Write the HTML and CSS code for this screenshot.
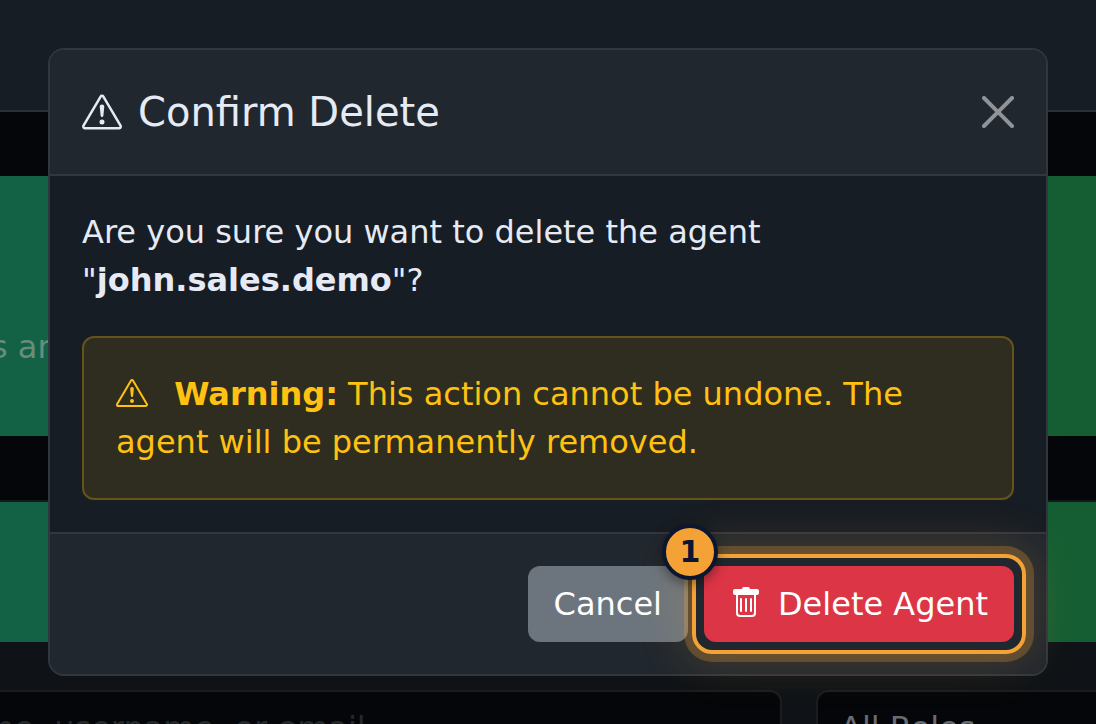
FILE: index.html
```html
<!DOCTYPE html>
<html lang="en">
<head>
<meta charset="utf-8">
<title>Confirm Delete</title>
<link rel="stylesheet" href="styles.css">
</head>
<body>
<div class="page">
  <header class="topbar"></header>
  <section class="hero"><p class="hero-text">s and</p></section>
  <section class="card">
    <div class="card-header"></div>
    <div class="filters">
      <input class="field search" type="text" placeholder="me, username, or email" aria-label="Search agents">
      <select class="field roles" aria-label="Role"><option>All Roles</option></select>
    </div>
  </section>
</div>

<div class="overlay">
  <div class="modal" role="dialog" aria-modal="true" aria-labelledby="modal-title">
    <div class="modal-header">
      <h1 class="modal-title" id="modal-title">
        <svg class="icon" viewBox="0 0 16 16" fill="currentColor" aria-hidden="true"><path d="M7.938 2.016A.13.13 0 0 1 8.002 2a.13.13 0 0 1 .063.016.15.15 0 0 1 .054.057l6.857 11.667c.036.06.035.124.002.183a.2.2 0 0 1-.054.06.1.1 0 0 1-.066.017H1.146a.1.1 0 0 1-.066-.017.2.2 0 0 1-.054-.06.18.18 0 0 1 .002-.183L7.884 2.073a.15.15 0 0 1 .054-.057m1.044-.45a1.13 1.13 0 0 0-1.96 0L.165 13.233c-.457.778.091 1.767.98 1.767h13.713c.889 0 1.438-.99.98-1.767z"/><path d="M7.002 12a1 1 0 1 1 2 0 1 1 0 0 1-2 0M7.1 5.995a.905.905 0 1 1 1.8 0l-.35 3.507a.552.552 0 0 1-1.1 0z"/></svg>
        Confirm Delete
      </h1>
      <button class="close" type="button" aria-label="Close">
        <svg viewBox="0 0 16 16" fill="currentColor" aria-hidden="true"><path d="M.293.293a1 1 0 0 1 1.414 0L8 6.586 14.293.293a1 1 0 1 1 1.414 1.414L9.414 8l6.293 6.293a1 1 0 0 1-1.414 1.414L8 9.414l-6.293 6.293a1 1 0 0 1-1.414-1.414L6.586 8 .293 1.707a1 1 0 0 1 0-1.414"/></svg>
      </button>
    </div>
    <div class="modal-body">
      <p class="question">Are you sure you want to delete the agent "<strong>john.sales.demo</strong>"?</p>
      <div class="alert" role="alert">
        <svg class="icon alert-icon" viewBox="0 0 16 16" fill="currentColor" aria-hidden="true"><path d="M7.938 2.016A.13.13 0 0 1 8.002 2a.13.13 0 0 1 .063.016.15.15 0 0 1 .054.057l6.857 11.667c.036.06.035.124.002.183a.2.2 0 0 1-.054.06.1.1 0 0 1-.066.017H1.146a.1.1 0 0 1-.066-.017.2.2 0 0 1-.054-.06.18.18 0 0 1 .002-.183L7.884 2.073a.15.15 0 0 1 .054-.057m1.044-.45a1.13 1.13 0 0 0-1.96 0L.165 13.233c-.457.778.091 1.767.98 1.767h13.713c.889 0 1.438-.99.98-1.767z"/><path d="M7.002 12a1 1 0 1 1 2 0 1 1 0 0 1-2 0M7.1 5.995a.905.905 0 1 1 1.8 0l-.35 3.507a.552.552 0 0 1-1.1 0z"/></svg>
        <strong>Warning:</strong> This action cannot be undone. The agent will be permanently removed.
      </div>
    </div>
    <div class="modal-footer">
      <button class="btn btn-cancel" type="button">Cancel</button>
      <div class="spotlight">
        <button class="btn btn-delete" type="button"><svg class="icon btn-icon" viewBox="0 0 16 16" fill="currentColor" aria-hidden="true"><path d="M5.500 5.500A.5.5 0 0 1 6 6v6a.5.5 0 0 1-1 0V6a.5.5 0 0 1 .5-.5m2.500 0a.5.5 0 0 1 .5.5v6a.5.5 0 0 1-1 0V6a.5.5 0 0 1 .5-.5m3 .5a.5.5 0 0 0-1 0v6a.5.5 0 0 0 1 0z"/><path d="M14.500 3a1 1 0 0 1-1 1H13v9a2 2 0 0 1-2 2H5a2 2 0 0 1-2-2V4h-.5a1 1 0 0 1-1-1V2a1 1 0 0 1 1-1H6a1 1 0 0 1 1-1h2a1 1 0 0 1 1 1h3.500a1 1 0 0 1 1 1zM4.118 4 4 4.059V13a1 1 0 0 0 1 1h6a1 1 0 0 0 1-1V4.059L11.882 4z"/></svg>Delete Agent</button>
        <span class="ring"></span>
        <span class="step">1</span>
      </div>
    </div>
  </div>
</div>
</body>
</html>
```
FILE: styles.css
```css
* { box-sizing: border-box; }

body {
  margin: 0;
  background: #040609;
  color: #e6eaf5;
  font: 32px/48px "DejaVu Sans", sans-serif;
}

button, input, select { font: inherit; }

.page {
  height: 100vh;
  overflow: hidden;
}

.topbar {
  height: 112px;
  background: #171d24;
  border-bottom: 2px solid #2b2f34;
}

.hero {
  display: flex;
  align-items: flex-end;
  height: 260px;
  margin-top: 64px;
  padding-bottom: 65px;
  background: linear-gradient(90deg, #136246, #155e33);
}

.hero-text {
  margin: 0 0 0 -9px;
  color: #688d7e;
}

.card {
  margin-top: 64px;
  border-top: 2px solid #15191c;
  background: #0f1317;
}

.card-header {
  height: 140px;
  background: linear-gradient(90deg, #136246, #155e33);
}

.filters {
  display: flex;
  gap: 34px;
  padding-top: 48px;
}

.field {
  height: 76px;
  border: 2px solid #1a1d20;
  border-radius: 12px;
  background: #040609;
}

.search {
  flex: 0 0 782px;
  border-left: 0;
  border-radius: 0 12px 12px 0;
  padding: 0;
  text-indent: -17px;
}

.search::placeholder {
  color: #26292c;
  opacity: 1;
}

.roles {
  flex: 1;
  min-width: 0;
  padding: 0 22px;
  border-right: 0;
  border-radius: 12px 0 0 12px;
  color: #686b70;
  appearance: none;
}

.overlay {
  position: fixed;
  inset: 0;
  padding: 48px;
}

.modal {
  border: 2px solid #32373d;
  border-radius: 16px;
  background: #171d24;
}

.modal-header {
  display: flex;
  align-items: center;
  justify-content: space-between;
  padding: 32px;
  border-bottom: 2px solid #32373d;
  border-radius: 14px 14px 0 0;
  background: #21272e;
}

.modal-title {
  display: flex;
  align-items: center;
  gap: 16px;
  margin: 0;
  font-size: 40px;
  font-weight: 400;
  line-height: 60px;
}

.icon {
  width: 1em;
  height: 1em;
  vertical-align: -0.125em;
}

.close {
  display: flex;
  padding: 0;
  border: 0;
  background: none;
  color: #909397;
}

.close svg {
  width: 32px;
  height: 32px;
}

.modal-body { padding: 32px; }

.question { margin: 0 0 32px; }

.alert {
  padding: 32px;
  border: 2px solid #66531a;
  border-radius: 12px;
  background: #2e2d20;
  color: #ffc112;
}

.alert-icon { margin-right: 16px; }

.modal-footer {
  display: flex;
  justify-content: flex-end;
  gap: 16px;
  padding: 32px;
  border-top: 2px solid #32373d;
  border-radius: 0 0 14px 14px;
  background: #21272e;
}

.btn {
  display: block;
  padding: 12px 24px;
  border: 2px solid transparent;
  border-radius: 12px;
  color: #fff;
  line-height: 48px;
}

.btn-cancel {
  border-color: #6c757d;
  background: #6c757d;
}

.btn-delete {
  border-color: #dc3545;
  background: #dc3545;
}

.btn-icon { margin-right: 16px; }

.spotlight { position: relative; }

.ring {
  position: absolute;
  inset: -12px;
  border: 4px solid #f4a236;
  border-radius: 20px;
  box-shadow: 0 0 0 8px rgba(244, 162, 54, 0.25), 0 0 48px 8px rgba(244, 162, 54, 0.18);
  pointer-events: none;
}

.step {
  position: absolute;
  top: -42px;
  left: -42px;
  width: 56px;
  height: 56px;
  border: 4px solid #0b1730;
  border-radius: 50%;
  background: #f4a236;
  box-shadow: 0 4px 12px rgba(0, 0, 0, 0.4);
  color: #0b1730;
  font-size: 30px;
  font-weight: 700;
  line-height: 48px;
  text-align: center;
}
```
